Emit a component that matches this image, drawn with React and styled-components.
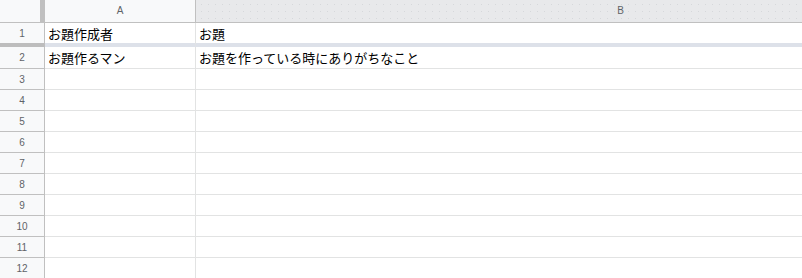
import styled, { createGlobalStyle } from "styled-components";

const GlobalStyle = createGlobalStyle`
  html, body {
    margin: 0;
    padding: 0;
    background: #fff;
    overflow: hidden;
  }
  * {
    box-sizing: border-box;
  }
`;

// column B is wider than the window, so its letter sits right of the visible middle
const Sheet = styled.div`
  width: 802px;
  height: 278px;
  display: grid;
  grid-template-columns: 45px 151px 850px;
  grid-auto-rows: auto;
  font-family: "Liberation Sans", Arial, "Noto Sans CJK JP", sans-serif;
  overflow: hidden;
`;

const Corner = styled.div`
  height: 23px;
  background: #f8f9fa;
  border-right: 5px solid #c0c0c0;
  border-bottom: 1px solid #c0c0c0;
`;

const ColHeader = styled.div`
  height: 23px;
  display: flex;
  align-items: center;
  justify-content: center;
  font-size: 10px;
  color: #5f6368;
  border-bottom: 1px solid #c0c0c0;
  border-right: 1px solid #c0c0c0;
  background-color: ${(p) => (p.$active ? "#e8e9eb" : "#f8f9fa")};
  background-image: ${(p) =>
    p.$active
      ? "radial-gradient(circle, #d6d8db 0.6px, transparent 0.9px)"
      : "none"};
  background-size: 7px 7px;
  background-position: 2px 1px;
  padding-bottom: 1px;
`;

const RowHeader = styled.div`
  height: ${(p) => p.$h}px;
  display: flex;
  align-items: center;
  justify-content: center;
  font-size: 10px;
  color: #5f6368;
  background: #f8f9fa;
  border-right: 1px solid #c0c0c0;
  border-bottom: ${(p) => (p.$frozen ? "4px solid #bdbdbd" : "1px solid #c0c0c0")};
`;

const Cell = styled.div`
  height: ${(p) => p.$h}px;
  display: flex;
  align-items: center;
  padding: 0 3px;
  font-size: 13px;
  color: #000;
  white-space: nowrap;
  border-right: 1px solid #e2e3e3;
  border-bottom: ${(p) => (p.$frozen ? "4px solid #dde1e9" : "1px solid #e2e3e3")};
`;

const rows = [
  { n: 1, a: "お題作成者", b: "お題", h: 24, frozen: true },
  { n: 2, a: "お題作るマン", b: "お題を作っている時にありがちなこと", h: 22 },
  ...Array.from({ length: 10 }, (_, i) => ({ n: i + 3, a: "", b: "", h: 21 })),
];

const Row = ({ row }) => (
  <>
    <RowHeader $h={row.h} $frozen={row.frozen}>
      {row.n}
    </RowHeader>
    <Cell $h={row.h} $frozen={row.frozen}>
      {row.a}
    </Cell>
    <Cell $h={row.h} $frozen={row.frozen}>
      {row.b}
    </Cell>
  </>
);

export default function App() {
  return (
    <>
      <GlobalStyle />
      <Sheet>
        <Corner />
        <ColHeader>A</ColHeader>
        <ColHeader $active>B</ColHeader>
        {rows.map((r) => (
          <Row key={r.n} row={r} />
        ))}
      </Sheet>
    </>
  );
}
